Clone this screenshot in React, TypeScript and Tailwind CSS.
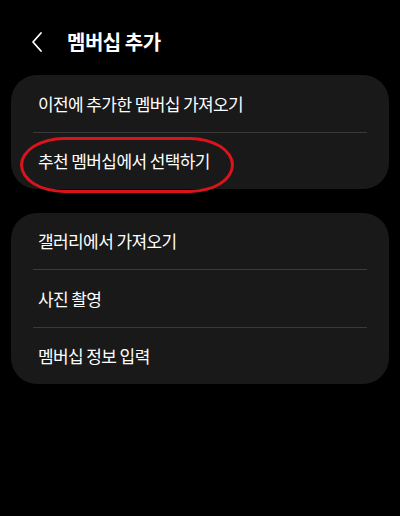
export default function App() {
  const font = { fontFamily: '"Noto Sans CJK KR", "Noto Sans", sans-serif' };

  return (
    <div className="w-[400px] h-[516px] bg-black text-white" style={font}>
      {/* Header */}
      <div className="flex items-center h-[75px] pl-[30px] pt-[8px]">
        <svg width="14" height="22" viewBox="0 0 14 22" fill="none">
          <path d="M11 2 L3 11 L11 20" stroke="white" strokeWidth="1.8" strokeLinecap="round" strokeLinejoin="round" />
        </svg>
        <h1 className="ml-[23px] text-[20px] font-bold tracking-[-0.5px]">멤버십 추가</h1>
      </div>

      <div className="px-[11px] flex flex-col gap-[24px]">
        {/* Card 1 */}
        <div className="relative bg-[#191919] rounded-[26px] px-[22px]">
          <div className="h-[57px] flex items-center pl-[5px] text-[17px] tracking-[-0.6px]">이전에 추가한 멤버십 가져오기</div>
          <div className="h-px bg-[#3a3a3a]" />
          <div className="h-[56px] flex items-center pl-[5px] text-[17px] tracking-[-0.6px]">추천 멤버십에서 선택하기</div>
          {/* annotation */}
          <div className="absolute left-[9px] top-[62px] w-[214px] h-[56px] border-[3px] border-[#d9141c] rounded-[44px/28px]" />
        </div>

        {/* Card 2 */}
        <div className="bg-[#191919] rounded-[26px] px-[22px]">
          <div className="h-[56px] flex items-center pl-[5px] text-[17px] tracking-[-0.6px]">갤러리에서 가져오기</div>
          <div className="h-px bg-[#3a3a3a]" />
          <div className="h-[57px] flex items-center pl-[5px] text-[17px] tracking-[-0.6px]">사진 촬영</div>
          <div className="h-px bg-[#3a3a3a]" />
          <div className="h-[56px] flex items-center pl-[5px] text-[17px] tracking-[-0.6px]">멤버십 정보 입력</div>
        </div>
      </div>
    </div>
  );
}
